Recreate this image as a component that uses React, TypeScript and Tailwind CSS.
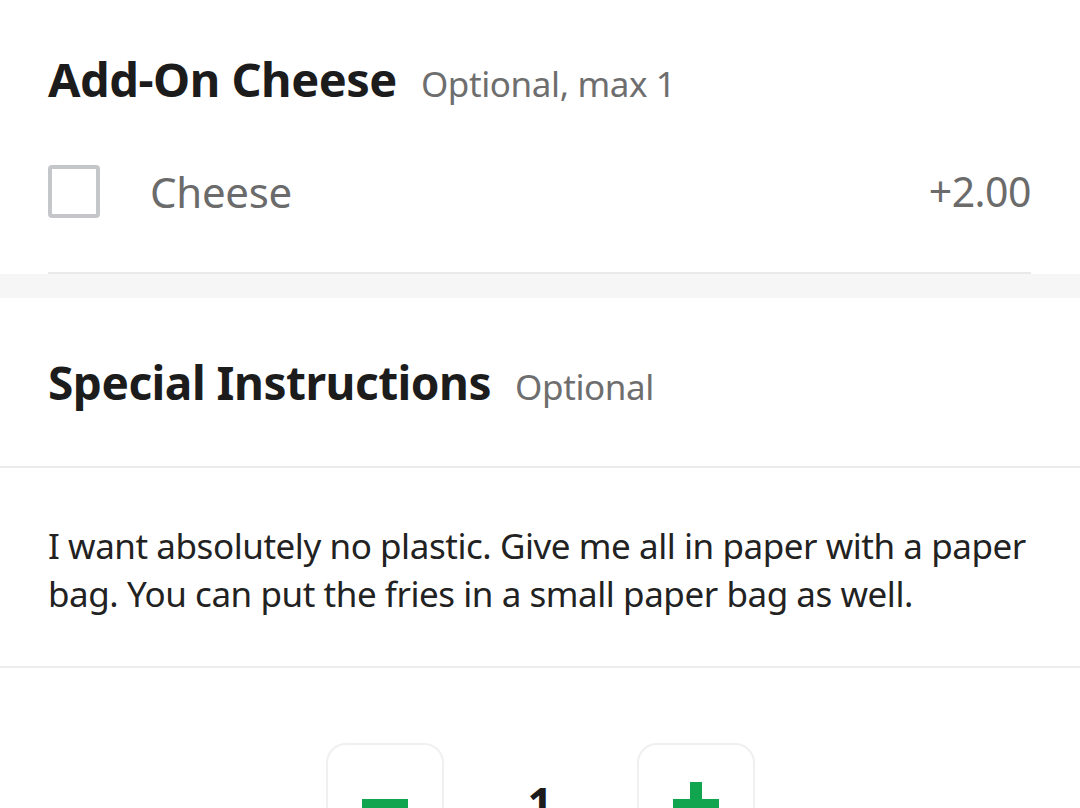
import React, {useState} from "react";

const font = {fontFamily: '"Noto Sans", "Open Sans", sans-serif'};

function SectionHeader({title, note, size}: {title: string; note: string; size: "a" | "b"}) {
	return (
		<div className="flex items-baseline gap-[24px]">
			<h2 className={size === "a"
				? "text-[47px] leading-[60px] font-bold text-[#1c1c1c] tracking-[-0.5px]"
				: "text-[46px] leading-[60px] font-bold text-[#1c1c1c] tracking-[-0.5px]"}>{title}</h2>
			<span className="text-[35px] leading-[50px] text-[#6e6e6e] tracking-[-0.4px]">{note}</span>
		</div>
	);
}

export default function App() {
	const [checked, setChecked] = useState(false);
	const [qty, setQty] = useState(1);

	return (
		<div className="w-[1080px] h-[808px] overflow-hidden bg-white" style={font}>
			<section className="px-12 pt-[49px]">
				<SectionHeader title="Add-On Cheese" note="Optional, max 1" size="a"/>
				<div className="flex items-center h-[53px] mt-[56px] mb-[54px] pr-[1px]">
					<button
						onClick={() => setChecked(!checked)}
						className="w-[52px] h-[53px] rounded-[4px] border-[4px] border-[#c4c6c9] bg-white"
					/>
					<span className="ml-[50px] text-[42px] text-[#6b6b6b] tracking-[-0.3px]">Cheese</span>
					<span className="ml-auto text-[41px] text-[#6b6b6b] tracking-[-0.5px]">+2.00</span>
				</div>
				<div className="h-[2px] bg-[#e9e9e9] mr-[1px]"/>
			</section>
			<div className="h-[24px] bg-[#f6f6f6]"/>
			<section className="px-12 pt-[54px] pb-[54px] border-b-2 border-[#ebebeb]">
				<SectionHeader title="Special Instructions" note="Optional" size="b"/>
			</section>
			<div className="px-12 pt-[54px] pb-[48px] border-b-2 border-[#ededed]">
				<p className="text-[35px] leading-[48px] text-[#222] tracking-[-0.45px]">
					I want absolutely no plastic. Give me all in paper with a paper bag. You can put the fries in a small paper bag as well.
				</p>
			</div>
			<div className="flex justify-center items-center pt-[75px]">
				<button
					onClick={() => setQty(Math.max(1, qty - 1))}
					className="w-[118px] h-[124px] rounded-[20px] border-2 border-[#f0f0f0] flex items-center justify-center"
				>
					<span className="block w-[46px] h-[12px] bg-[#12a550]"/>
				</button>
				<span className="w-[193px] text-center text-[44px] leading-[56px] font-bold text-[#1c1c1c] -mt-[4px]">{qty}</span>
				<button
					onClick={() => setQty(qty + 1)}
					className="w-[118px] h-[124px] rounded-[20px] border-2 border-[#f0f0f0] flex items-center justify-center relative"
				>
					<span className="block w-[46px] h-[12px] bg-[#12a550]"/>
					<span className="absolute w-[12px] h-[46px] bg-[#12a550]"/>
				</button>
			</div>
		</div>
	);
}
